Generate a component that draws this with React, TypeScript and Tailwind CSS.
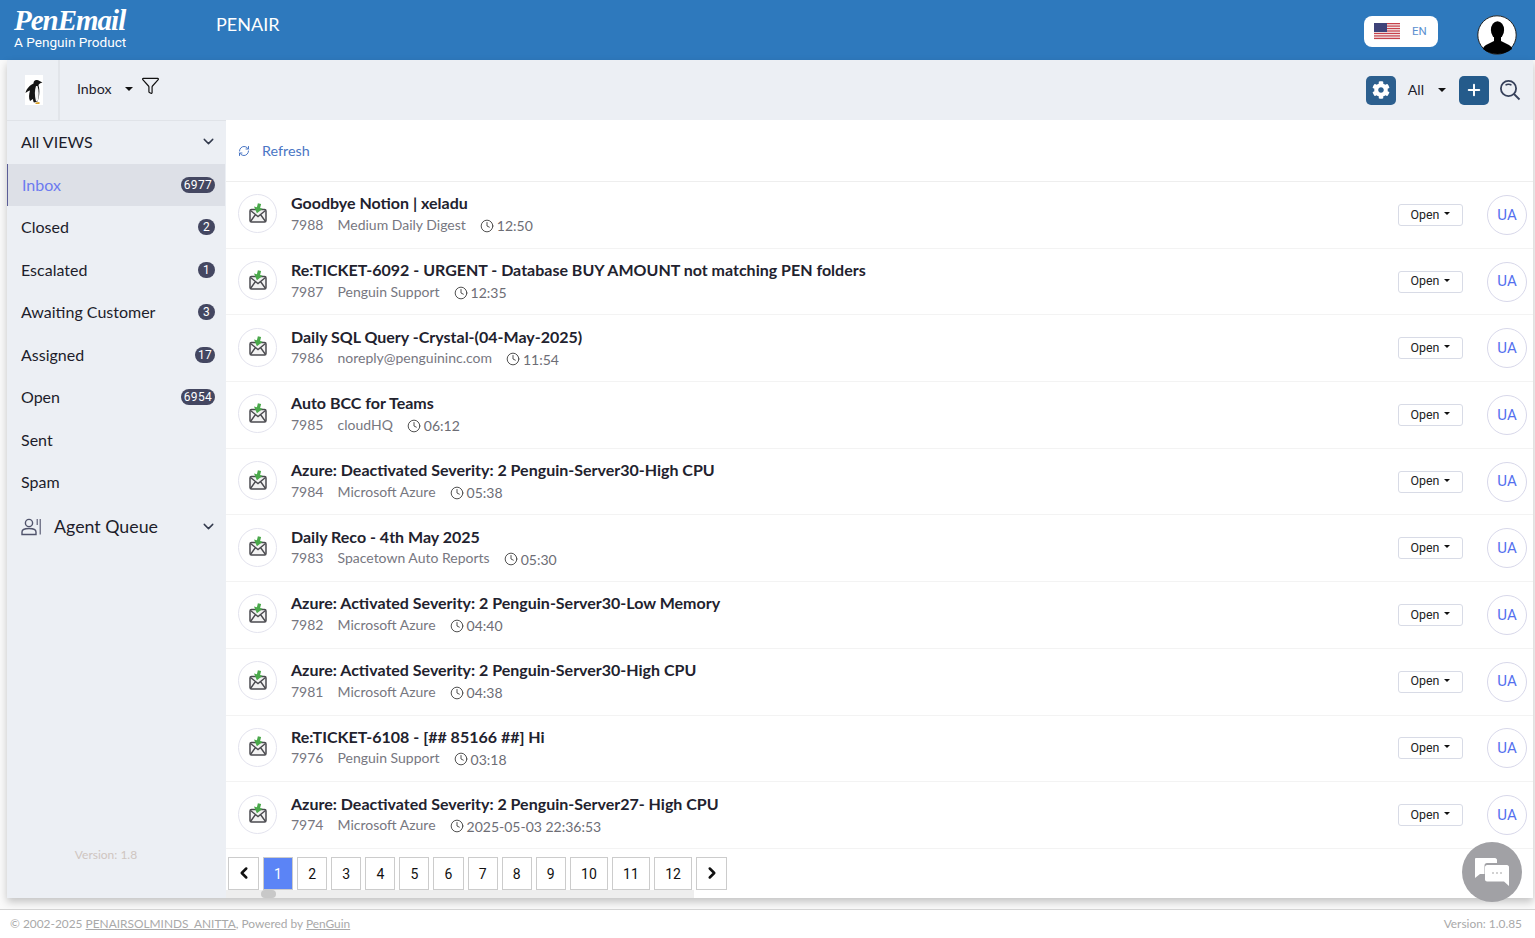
import React from "react";
import { ChevronDown, ChevronLeft, ChevronRight, Filter, Plus, RefreshCw, Clock } from "lucide-react";
import { FaCog } from "react-icons/fa";

const views: [string, string?][] = [
  ["Closed", "2"],
  ["Escalated", "1"],
  ["Awaiting Customer", "3"],
  ["Assigned", "17"],
  ["Open", "6954"],
  ["Sent"],
  ["Spam"],
];

const rows = [
  ["Goodbye Notion | xeladu", "7988", "Medium Daily Digest", "12:50"],
  ["Re:TICKET-6092 - URGENT - Database BUY AMOUNT not matching PEN folders", "7987", "Penguin Support", "12:35"],
  ["Daily SQL Query -Crystal-(04-May-2025)", "7986", "noreply@penguininc.com", "11:54"],
  ["Auto BCC for Teams", "7985", "cloudHQ", "06:12"],
  ["Azure: Deactivated Severity: 2 Penguin-Server30-High CPU", "7984", "Microsoft Azure", "05:38"],
  ["Daily Reco - 4th May 2025", "7983", "Spacetown Auto Reports", "05:30"],
  ["Azure: Activated Severity: 2 Penguin-Server30-Low Memory", "7982", "Microsoft Azure", "04:40"],
  ["Azure: Activated Severity: 2 Penguin-Server30-High CPU", "7981", "Microsoft Azure", "04:38"],
  ["Re:TICKET-6108 - [## 85166 ##] Hi", "7976", "Penguin Support", "03:18"],
  ["Azure: Deactivated Severity: 2 Penguin-Server27- High CPU", "7974", "Microsoft Azure", "2025-05-03 22:36:53"],
];

const pages = ["1", "2", "3", "4", "5", "6", "7", "8", "9", "10", "11", "12"];

function Badge({ text }: { text: string }) {
  return (
    <span className="h-[16px] min-w-[17px] px-[3px] rounded-full bg-[#444761] text-white text-[12px] leading-[16px] text-center font-[Roboto,sans-serif] tracking-[0.3px]">
      {text}
    </span>
  );
}

function MailIcon() {
  return (
    <svg width="18" height="20" viewBox="0 0 18 20" className="block -mt-[2px]">
      <rect x="1" y="6.5" width="16" height="12.5" rx="1.5" fill="#f3f3f3" stroke="#4b4b50" strokeWidth="1.5" />
      <path d="M1.5 7.5 L9 13.5 L16.5 7.5 M1.5 18.5 L6.5 11.5 M16.5 18.5 L11.5 11.5" fill="none" stroke="#4b4b50" strokeWidth="1.4" />
      <path d="M7.500 0.5 H10.800 V4.500 H13.500 L9 10.500 L4.500 4.500 H7.500 Z" fill="#4aa84a" transform="rotate(14 9 6)" />
    </svg>
  );
}

function Penguin() {
  return (
    <svg width="18" height="30" viewBox="0 0 18 30" className="block bg-white">
      <path d="M11.500 5 C9.500 5 8.500 6.500 8.500 8.500 C5 10 1.500 13.500 0.500 18 C2.500 16.500 4 15.500 5 15.500 C4 19 3.500 23 5 26 L8 24 C8 26 8.500 27 9 27.500 L12.500 26.500 C14.500 22 15 15 13.500 10.500 C13.500 9 15 8 17.500 7.500 L14.500 6 C13.500 5 12.500 5 11.500 5 Z" fill="#141414" />
      <path d="M11 11 C9.500 15 9.500 21 11 26.500 L13 25.500 C14 21 14 15 12.500 11 Z" fill="#f4f4f4" />
      <path d="M10.500 27.500 L14.500 27 L14.500 29 L10.500 29 Z" fill="#d9a02a" />
    </svg>
  );
}

function Flag() {
  const stripes = [0, 1, 2, 3, 4, 5, 6];
  return (
    <svg width="26" height="17" viewBox="0 0 26 17" className="block">
      <rect width="26" height="17" fill="#f4f0f0" />
      {stripes.map((i) => (
        <rect key={i} y={i * 2.46} width="26" height="1.25" fill="#c8414b" />
      ))}
      <rect width="13" height="9" fill="#3e4379" />
    </svg>
  );
}

function Avatar() {
  return (
    <svg width="40" height="40" viewBox="0 0 40 40" className="block">
      <circle cx="20" cy="20" r="19.2" fill="#fff" stroke="#222" strokeWidth="1" />
      <ellipse cx="20.5" cy="15" rx="6.6" ry="8.8" fill="#000" />
      <path d="M17 21 H24 V26 L32 30 C34 31 35 33 35 34 C31 37.500 26 39 20.500 39 C15 39 10 37.500 6 34 C6 33 7 31 9 30 L17 26 Z" fill="#000" />
    </svg>
  );
}

function SearchLens() {
  return (
    <svg width="22" height="22" viewBox="0 0 22 22" fill="none" className="block">
      <circle cx="9.5" cy="9.5" r="7.6" stroke="#36405a" strokeWidth="1.8" />
      <path d="M15 15 L20.5 20.5" stroke="#36405a" strokeWidth="1.8" />
      <path d="M6.5 6.2 C8 4.8 11 4.8 12.5 6.2" stroke="#36405a" strokeWidth="1.5" />
    </svg>
  );
}

function AgentIcon() {
  return (
    <svg width="20" height="18" viewBox="0 0 20 18" fill="none" className="block">
      <circle cx="8" cy="5" r="3.6" stroke="#50536b" strokeWidth="1.4" />
      <path d="M1 16.5 V14 C1 11.500 4 10.500 8 10.500 C12 10.500 15 11.500 15 14 V16.500 Z" stroke="#50536b" strokeWidth="1.4" />
      <path d="M19.200 1 V16.500 M16.200 1 V7" stroke="#50536b" strokeWidth="1.1" />
    </svg>
  );
}

function Caret({ className = "" }: { className?: string }) {
  return <span className={"inline-block w-0 h-0 border-x-[4px] border-x-transparent border-t-[4px] border-t-[#111] " + className} />;
}

function ChatIcon() {
  return (
    <svg width="36" height="30" viewBox="0 0 36 30" className="block">
      <path d="M2 1 H21 C22 1 23 2 23 3 V6 H13 C11.500 6 10.500 7 10.500 8.500 V17 H6 L1 21 V2 C1 1.500 1.500 1 2 1 Z" fill="#fff" />
      <path d="M13 8 H33 C34 8 35 9 35 10 V29 L30 24.500 H13 C12 24.500 11 23.500 11 22.500 V10 C11 9 12 8 13 8 Z" fill="#fff" />
      <circle cx="19" cy="16" r="0.8" fill="#999" />
      <circle cx="23" cy="16" r="0.8" fill="#999" />
      <circle cx="27" cy="16" r="0.8" fill="#999" />
    </svg>
  );
}

export default function App() {
  return (
    <div className="relative h-[938px] w-full overflow-hidden flex flex-col bg-[#fafafa] font-[Lato,sans-serif] text-[#1d1d2b]">
      <header className="h-[60px] shrink-0 bg-[#2e79bd] flex items-center text-white">
        <div className="w-[216px] pl-[14px] shrink-0 -mt-[8px]">
          <div className="h-[31px] text-[29px] leading-[31px] font-bold italic tracking-[-1px] font-['Liberation_Serif',serif] whitespace-nowrap">PenEmail</div>
          <div className="text-[13.6px] leading-[12px] font-[Roboto,sans-serif] whitespace-nowrap">A Penguin Product</div>
        </div>
        <div className="text-[18px] -mt-[12px]">PENAIR</div>
        <div className="ml-auto flex items-start h-full">
          <div className="mt-[16px] w-[74px] h-[31px] bg-white rounded-lg flex items-center pl-[10px] gap-[12px]">
            <Flag />
            <span className="text-[11.5px] text-[#5a8fd0] font-[Roboto,sans-serif]">EN</span>
          </div>
          <div className="mt-[15px] ml-[39px] mr-[18px]"><Avatar /></div>
        </div>
      </header>

      <div className="flex-1 flex min-h-0 pl-[7px] pr-[2px]">
        <div className="flex-1 flex flex-col min-w-0 h-[838px] shadow-[0_4px_8px_rgba(0,0,0,0.22)]">
          <div className="h-[60px] shrink-0 bg-[#eceff4] flex items-center pr-[12px]">
            <div className="w-[53px] h-full flex items-center justify-center pl-[3px] border-r-2 border-[#e2e5ea]"><Penguin /></div>
            <span className="ml-[17px] text-[14.2px] -mt-[3px]">Inbox</span>
            <Caret className="ml-[13px] -mt-[2px]" />
            <Filter size={19} strokeWidth={1.5} className="ml-[8px] -mt-[10px] text-[#111]" />
            <div className="ml-auto flex items-center">
              <div className="w-[30px] h-[29px] rounded-[5px] bg-[#2c5f8e] flex items-center justify-center">
                <FaCog size={18} className="text-white" />
              </div>
              <span className="ml-[12px] text-[14.2px]">All</span>
              <Caret className="ml-[14px] mr-[13px]" />
              <div className="w-[30px] h-[29px] rounded-[5px] bg-[#255b8b] flex items-center justify-center">
                <Plus size={18} strokeWidth={2.6} className="text-white" />
              </div>
              <div className="ml-[10px]"><SearchLens /></div>
            </div>
          </div>

          <div className="flex-1 flex min-h-0">
            <aside className="relative w-[219px] shrink-0 bg-[#eceff4] flex flex-col border-t border-[#e0e3e8]">
              <div className="h-[43px] flex items-center justify-between pl-[14px] pr-[9px] text-[16px] pb-[2px]">
                <span>All VIEWS</span>
                <ChevronDown size={17} className="text-[#333a4d]" />
              </div>
              <div className="h-[42px] flex items-center justify-between pl-[14px] pr-[10px] mr-[1px] bg-[#dde0e7] border-l border-[#5b5e97] text-[#6c7bf0] text-[16px]">
                <span>Inbox</span>
                <Badge text="6977" />
              </div>
              {views.map(([name, count]) => (
                <div key={name} className="h-[42.5px] flex items-center justify-between pl-[14px] pr-[11px] text-[16px]">
                  <span>{name}</span>
                  {count ? <Badge text={count} /> : null}
                </div>
              ))}
              <div className="h-[46px] flex items-center pl-[14px] pr-[9px]">
                <AgentIcon />
                <span className="ml-[13px] text-[17.8px]">Agent Queue</span>
                <ChevronDown size={17} className="ml-auto text-[#333a4d]" />
              </div>
              <div className="mt-auto mb-[34px] text-center text-[12px] text-[#cfc5c0] pr-[21px]">Version: 1.8</div>
            </aside>

            <main className="flex-1 min-w-0 bg-white flex flex-col">
              <div className="h-[62px] shrink-0 flex items-center pl-[12px] border-b border-[#eeeeee] text-[#4a76c4] text-[14.3px]">
                <RefreshCw size={12} strokeWidth={2} className="text-[#4a76c4]" />
                <span className="ml-[12px]">Refresh</span>
              </div>
              {rows.map(([title, id, from, time]) => (
                <div key={id} className="h-[66.7px] shrink-0 flex items-center pl-[12px] pr-[6px] border-b border-[#f3f3f3]">
                  <div className="w-[39px] h-[39px] rounded-full border border-[#e3e3ee] flex items-center justify-center -mt-[2px]"><MailIcon /></div>
                  <div className="ml-[14px] flex-1 min-w-0 mt-[-1px]">
                    <div className="text-[16px] leading-[21px] font-bold text-[#22222e] whitespace-nowrap">{title}</div>
                    <div className="flex items-center text-[14px] leading-[20px] text-[#77777f] whitespace-nowrap">
                      <span>{id}</span>
                      <span className="ml-[14px]">{from}</span>
                      <Clock size={14} strokeWidth={1.6} className="ml-[14px] mt-[2px] text-[#444]" />
                      <span className="ml-[3px] mt-[3px] text-[#6d6d75]">{time}</span>
                    </div>
                  </div>
                  <div className="w-[65px] h-[22px] rounded-[3px] border border-[#d8dbe6] flex items-center justify-center text-[12.4px] font-[Roboto,sans-serif] text-[#222]">
                    Open<Caret className="ml-[5px] -mt-[3px] !border-x-[3px] !border-t-[3px]" />
                  </div>
                  <div className="ml-[24px] w-[40px] h-[40px] rounded-full border border-[#d8d8ea] flex items-center justify-center text-[15px] text-[#5470ee] font-[Roboto,sans-serif]">UA</div>
                </div>
              ))}
              <div className="relative flex-1 min-h-0">
                <div className="flex items-start pt-[8px] pl-[2px] gap-[4px]">
                  <div className="w-[31px] h-[33px] border border-[#cccccc] bg-white flex items-center justify-center"><ChevronLeft size={18} strokeWidth={3.4} className="text-[#111]" /></div>
                  {pages.map((p, i) => (
                    <div key={p} className={"h-[33px] pt-[2px] border border-[#cccccc] flex items-center justify-center text-[14px] font-[Roboto,sans-serif] " + (i === 0 ? "bg-[#5b84f6] text-white w-[30.1px]" : p.length > 1 ? "bg-white text-[#111] w-[38.1px]" : "bg-white text-[#111] w-[30.1px]")}>
                      {p}
                    </div>
                  ))}
                  <div className="w-[31px] h-[33px] border border-[#cccccc] bg-white flex items-center justify-center"><ChevronRight size={18} strokeWidth={3.4} className="text-[#111]" /></div>
                </div>
                <div className="w-[468px] h-[8px] bg-[#eeeeee] mt-0">
                  <div className="ml-[35px] w-[15px] h-[8px] rounded-full bg-[#c8c8c8]" />
                </div>
              </div>
            </main>
          </div>
        </div>
      </div>

      <footer className="h-[29px] shrink-0 mt-[-18px] border-t border-[#d4d4d4] bg-white flex items-center justify-between pl-[10px] pr-[13px] text-[11.9px] text-[#a9a9a9]">
        <span>© 2002-2025 <span className="underline">PENAIRSOLMINDS_ANITTA</span>, Powered by <span className="underline">PenGuin</span></span>
        <span>Version: 1.0.85</span>
      </footer>

      <div className="absolute left-[1462px] top-[842px] w-[60px] h-[60px] rounded-full bg-[#a1a1a5] flex items-center justify-center">
        <ChatIcon />
      </div>
    </div>
  );
}
